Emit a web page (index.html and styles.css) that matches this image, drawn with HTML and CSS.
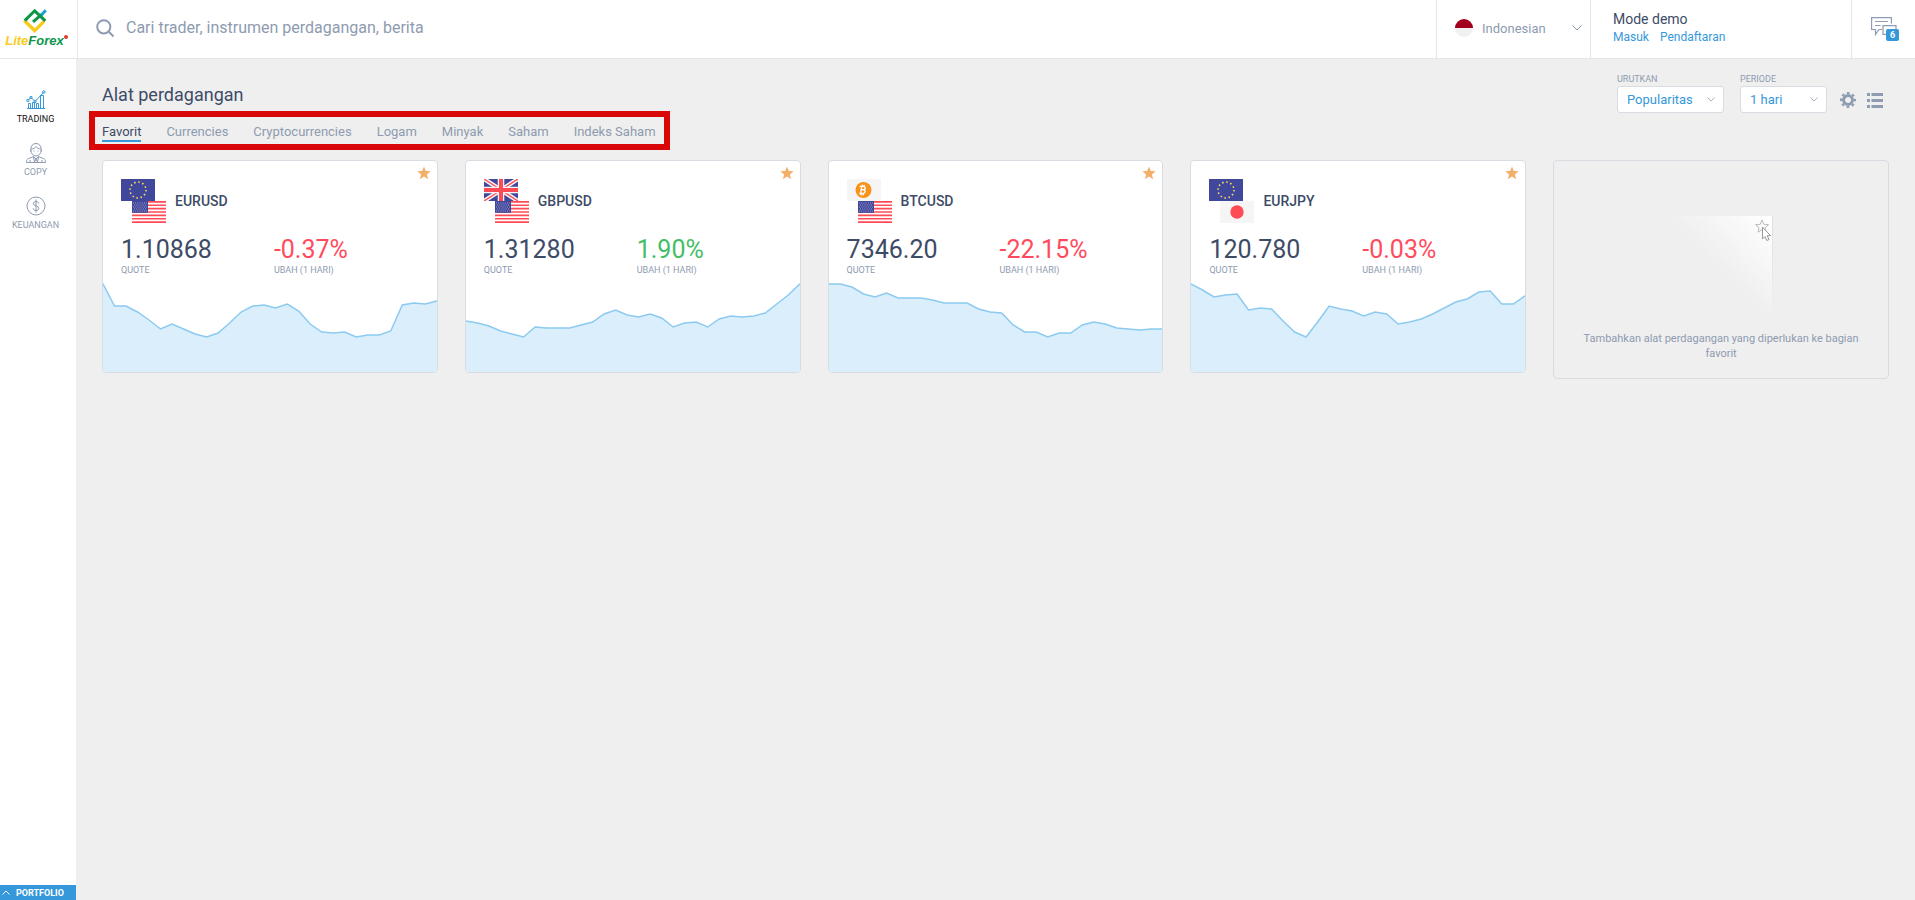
FILE: index.html
```
<!DOCTYPE html>
<html lang="id">
<head>
    <meta charset="UTF-8">
    <meta name="viewport" content="width=device-width, initial-scale=1.0">
    <title>LiteForex</title>
    <link rel="stylesheet" href="styles.css">
</head>
<body>
    <svg class="sprite" aria-hidden="true">
        <symbol id="flag-eu" viewBox="0 0 34 22">
            <rect width="34" height="22" fill="#41479b"/>
            <circle cx="17" cy="11" r="8" fill="none" stroke="#ffe15a" stroke-width="1.6" stroke-dasharray="1.5 2.69"/>
        </symbol>
        <symbol id="flag-us" viewBox="0 0 34 22">
            <rect width="34" height="22" fill="#fff"/>
            <path d="M0 .85h34M0 4.23h34M0 7.61h34M0 11h34M0 14.38h34M0 17.77h34M0 21.15h34" stroke="#ff4b55" stroke-width="1.7"/>
            <rect width="16" height="11.8" fill="#41479b"/>
            <path d="M1 2h14M2 4h13M1 6h14M2 8h13M1 10h14" stroke="#a9acd3" stroke-width=".9" stroke-dasharray="1 1.2"/>
        </symbol>
        <symbol id="flag-gb" viewBox="0 0 34 22">
            <rect width="34" height="22" fill="#41479b"/>
            <path d="M0 0l34 22M34 0L0 22" stroke="#f5f5f5" stroke-width="4.4"/>
            <path d="M0 0l14 9M34 0L20 9M0 22l14-9M34 22l-14-9" stroke="#ff4b55" stroke-width="1.4"/>
            <path d="M17 0v22M0 11h34" stroke="#f5f5f5" stroke-width="6.6"/>
            <path d="M17 0v22M0 11h34" stroke="#ff4b55" stroke-width="4"/>
        </symbol>
        <symbol id="flag-btc" viewBox="0 0 34 22">
            <rect width="34" height="22" fill="#f5f5f5"/>
            <circle cx="16.5" cy="11" r="8" fill="#f7931a"/>
            <path d="M14.6 7.6l-.9 6.9M12.6 7.4h3.6c2.9.1 2.7 3.3-.2 3.3h-1.5M16 10.8c3.2.2 2.7 3.7-.7 3.7h-3M15.4 5.6l-.2 1.6M17.4 5.8l-.2 1.6M14.4 14.6l-.2 1.7M16.4 14.6l-.2 1.7" fill="none" stroke="#fff" stroke-width="1.3"/>
        </symbol>
        <symbol id="flag-jp" viewBox="0 0 34 22">
            <rect width="34" height="22" fill="#f5f5f5"/>
            <circle cx="17" cy="11" r="6.7" fill="#ff4b55"/>
        </symbol>
        <symbol id="star" viewBox="0 0 14 14">
            <path d="M7 .4l1.8 4.7 4.9.2-3.8 3.1 1.3 4.9L7 10.6l-4.2 2.7 1.3-4.9L.3 5.3l4.9-.2z" fill="#f2af6a"/>
        </symbol>
        <symbol id="chevron" viewBox="0 0 10 6">
            <path d="M.5.5L5 5 9.500.5" fill="none" stroke="#8e9bb0"/>
        </symbol>
    </svg>

    <header class="header">
        <a class="logo" href="#">
            <svg width="24" height="25" viewBox="0 0 24 25" fill="none" stroke-width="3">
                <path d="M1.200 12.500L11.700 22.600l9.300-9.200" stroke="#f9cb1c" stroke-width="3.400"/>
                <path d="M18 7.600L22.800 2.200" stroke="#16a0e0"/>
                <path d="M4 12.800L2.800 11.600l8.900-8.800 10.600 10M10 13.800l8.500-7.200" stroke="#0d9648"/>
            </svg>
            <span class="logo-text"><span class="logo-lite">Lite</span>Forex<i class="logo-dot"></i></span>
        </a>
        <label class="search">
            <svg width="18" height="18" viewBox="0 0 18 18" fill="none" stroke="#8e9bb0" stroke-width="2">
                <circle cx="7.800" cy="7.800" r="6.600"/>
                <path d="M12.500 12.500l5 5"/>
            </svg>
            <input type="text" placeholder="Cari trader, instrumen perdagangan, berita" aria-label="Cari">
        </label>
        <button class="language" type="button">
            <svg width="18" height="18" viewBox="0 0 18 18">
                <circle cx="9" cy="9" r="9" fill="#f0f0f0"/>
                <path d="M0 9a9 9 0 0 1 18 0z" fill="#a2001d"/>
            </svg>
            <span>Indonesian</span>
            <svg class="language-arrow" width="10" height="6"><use href="#chevron"/></svg>
        </button>
        <div class="account">
            <div class="account-mode">Mode demo</div>
            <div class="account-links">
                <a href="#">Masuk</a>
                <a href="#">Pendaftaran</a>
            </div>
        </div>
        <button class="messages" type="button" aria-label="Pesan">
            <svg width="26" height="19" viewBox="0 0 26 19" fill="none" stroke="#8e9bb0" stroke-width="1.200">
                <path d="M11 12.500H8l-3.500 5v-5H.6V.6h19.800v6"/>
                <path d="M4 4.500h13M4 8.500h5.500"/>
                <path d="M25 13V8.600H12v8.800h4"/>
            </svg>
            <span class="badge">6</span>
        </button>
    </header>

    <div class="page">
        <aside class="sidebar">
            <nav class="menu">
                <a class="menu-item active" href="#">
                    <svg width="20" height="20" viewBox="0 0 20 20" fill="none" stroke="#3498db">
                        <path d="M2.500 18.500v-5h2v5M6.500 18.500v-6h2v6M10.500 18.500v-5h2v5M14.500 18.500V5.500h3v13M1 18.500h18"/>
                        <path d="M2 10.500l3-3 4 4 8.500-9"/>
                        <circle cx="1.800" cy="10.500" r="1.200"/>
                        <circle cx="5" cy="7.500" r="1.200"/>
                        <circle cx="9" cy="11.500" r="1.200"/>
                        <circle cx="17.800" cy="2" r="1.200"/>
                    </svg>
                    TRADING
                </a>
                <a class="menu-item" href="#">
                    <svg width="20" height="20" viewBox="0 0 20 20" fill="none" stroke="#8e9bb0">
                        <path d="M5 5.500C5 2.500 7 .5 10 .5s5 2 5 5v2c0 3.200-2.200 5.500-5 5.500s-5-2.300-5-5.500z"/>
                        <path d="M5 6c3 0 4-1 5-2.500C11 5 13 6 15 6M4.500 6.500v2M15.500 6.500v2M7.500 8h1M11.500 8h1"/>
                        <path d="M.5 19.500c0-3 1-4 3.500-4.500l3.500-1.500L10 16l2.500-2.500L16 15c2.500.5 3.500 1.500 3.500 4.500z"/>
                        <path d="M7.500 14l1 5 1.500-3 1.500 3 1-5M4 17v2M16 17v2"/>
                    </svg>
                    COPY
                </a>
                <a class="menu-item" href="#">
                    <svg width="20" height="20" viewBox="0 0 20 20" fill="none" stroke="#8e9bb0">
                        <circle cx="10" cy="10" r="9"/>
                        <path d="M12.600 7.500c-.2-1.400-1.200-2-2.600-2s-2.600.8-2.600 2.200c0 3 5.400 1.500 5.400 4.600 0 1.400-1.200 2.200-2.800 2.200s-2.700-.8-2.800-2.200M10 3.500v13"/>
                    </svg>
                    KEUANGAN
                </a>
            </nav>
            <button class="portfolio" type="button">
                <svg width="8" height="5" viewBox="0 0 8 5"><path d="M.5 4.500L4 1l3.500 3.500" fill="none" stroke="#fff"/></svg>
                PORTFOLIO
            </button>
        </aside>

        <main class="content">
            <div class="toolbar">
                <div class="heading">
                    <h1>Alat perdagangan</h1>
                    <nav class="tabs">
                        <a class="active" href="#">Favorit</a>
                        <a href="#">Currencies</a>
                        <a href="#">Cryptocurrencies</a>
                        <a href="#">Logam</a>
                        <a href="#">Minyak</a>
                        <a href="#">Saham</a>
                        <a href="#">Indeks Saham</a>
                    </nav>
                </div>
                <div class="filters">
                    <div class="filter filter-sort">
                        <label for="sort">URUTKAN</label>
                        <div class="select">
                            <select id="sort"><option>Popularitas</option></select>
                            <svg width="8" height="5"><use href="#chevron"/></svg>
                        </div>
                    </div>
                    <div class="filter filter-period">
                        <label for="period">PERIODE</label>
                        <div class="select">
                            <select id="period"><option>1 hari</option></select>
                            <svg width="8" height="5"><use href="#chevron"/></svg>
                        </div>
                    </div>
                    <button class="icon-button" type="button" aria-label="Pengaturan">
                        <svg width="16" height="16" viewBox="0 0 16 16" fill="none" stroke="#8e9bb0">
                            <circle cx="8" cy="8" r="4.500" stroke-width="3"/>
                            <circle cx="8" cy="8" r="7" stroke-width="2" stroke-dasharray="2.700 2.798" stroke-dashoffset="1.350"/>
                        </svg>
                    </button>
                    <button class="icon-button" type="button" aria-label="Daftar">
                        <svg width="16" height="16" viewBox="0 0 16 16" stroke="#8e9bb0" stroke-width="3">
                            <path d="M0 2.500h3M4.500 2.500H16M0 8.500h3M4.500 8.500H16M0 14.500h3M4.500 14.500H16"/>
                        </svg>
                    </button>
                </div>
            </div>

            <div class="cards">
                <article class="card">
                    <button class="favorite" type="button" aria-label="Favorit"><svg width="14" height="14"><use href="#star"/></svg></button>
                    <div class="instrument">
                        <div class="flags">
                            <svg width="34" height="22"><use href="#flag-eu"/></svg>
                            <svg width="34" height="22"><use href="#flag-us"/></svg>
                        </div>
                        <h2>EURUSD</h2>
                    </div>
                    <div class="values">
                        <div><div class="number">1.10868</div><div class="caption">QUOTE</div></div>
                        <div><div class="number down">-0.37%</div><div class="caption">UBAH (1 HARI)</div></div>
                    </div>
                    <svg class="chart" viewBox="0 0 29 89" preserveAspectRatio="none">
                        <path d="M-1 95V1H0L1 23 2 23 3 29 4 37 5 46 6 41 7 46 8 51 9 54 10 50 11 40 12 29 13 23 14 22 15 25 16 21 17 28 18 41 19 49 20 50 21 49 22 54 23 52 24 52 25 48 26 22 27 20 28 21 29 18H30V95"/>
                    </svg>
                </article>

                <article class="card">
                    <button class="favorite" type="button" aria-label="Favorit"><svg width="14" height="14"><use href="#star"/></svg></button>
                    <div class="instrument">
                        <div class="flags">
                            <svg width="34" height="22"><use href="#flag-gb"/></svg>
                            <svg width="34" height="22"><use href="#flag-us"/></svg>
                        </div>
                        <h2>GBPUSD</h2>
                    </div>
                    <div class="values">
                        <div><div class="number">1.31280</div><div class="caption">QUOTE</div></div>
                        <div><div class="number up">1.90%</div><div class="caption">UBAH (1 HARI)</div></div>
                    </div>
                    <svg class="chart" viewBox="0 0 29 89" preserveAspectRatio="none">
                        <path d="M-1 95V38H0L1 40 2 43 3 48 4 51 5 54 6 44 7 45 8 45 9 45 10 42 11 39 12 31 13 27 14 32 15 34 16 31 17 35 18 44 19 40 20 39 21 44 22 36 23 33 24 34 25 33 26 30 27 21 28 12 29 1H30V95"/>
                    </svg>
                </article>

                <article class="card">
                    <button class="favorite" type="button" aria-label="Favorit"><svg width="14" height="14"><use href="#star"/></svg></button>
                    <div class="instrument">
                        <div class="flags">
                            <svg width="34" height="22"><use href="#flag-btc"/></svg>
                            <svg width="34" height="22"><use href="#flag-us"/></svg>
                        </div>
                        <h2>BTCUSD</h2>
                    </div>
                    <div class="values">
                        <div><div class="number">7346.20</div><div class="caption">QUOTE</div></div>
                        <div><div class="number down">-22.15%</div><div class="caption">UBAH (1 HARI)</div></div>
                    </div>
                    <svg class="chart" viewBox="0 0 29 89" preserveAspectRatio="none">
                        <path d="M-1 95V1H0L1 1 2 4 3 11 4 14 5 10 6 15 7 15 8 15 9 17 10 20 11 20 12 20 13 26 14 29 15 30 16 42 17 49 18 49 19 54 20 50 21 50 22 42 23 39 24 41 25 45 26 46 27 47 28 46 29 46H30V95"/>
                    </svg>
                </article>

                <article class="card">
                    <button class="favorite" type="button" aria-label="Favorit"><svg width="14" height="14"><use href="#star"/></svg></button>
                    <div class="instrument">
                        <div class="flags">
                            <svg width="34" height="22"><use href="#flag-eu"/></svg>
                            <svg width="34" height="22"><use href="#flag-jp"/></svg>
                        </div>
                        <h2>EURJPY</h2>
                    </div>
                    <div class="values">
                        <div><div class="number">120.780</div><div class="caption">QUOTE</div></div>
                        <div><div class="number down">-0.03%</div><div class="caption">UBAH (1 HARI)</div></div>
                    </div>
                    <svg class="chart" viewBox="0 0 29 89" preserveAspectRatio="none">
                        <path d="M-1 95V1H0L1 7 2 14 3 12 4 11 5 27 6 25 7 26 8 38 9 49 10 54 11 39 12 23 13 26 14 28 15 33 16 29 17 31 18 41 19 39 20 36 21 31 22 25 23 19 24 16 25 9 26 8 27 21 28 21 29 13H30V95"/>
                    </svg>
                </article>

                <div class="card card-empty">
                    <svg width="104" height="106" viewBox="0 0 104 106">
                        <defs>
                            <linearGradient id="shine" x1="1" y1="0" x2=".5" y2=".5">
                                <stop offset="0" stop-color="#fff"/>
                                <stop offset=".25" stop-color="#fbfbfb"/>
                                <stop offset="1" stop-color="#efefef"/>
                            </linearGradient>
                            <linearGradient id="edge" x1="0" y1="0" x2="0" y2="1">
                                <stop offset="0" stop-color="#dfdfdf"/>
                                <stop offset="1" stop-color="#efefef"/>
                            </linearGradient>
                        </defs>
                        <rect x="103" y="1" width="1" height="98" fill="url(#edge)"/>
                        <rect y="1" width="103" height="105" fill="url(#shine)"/>
                        <path d="M93 5l1.800 4.300 4.700.4-3.500 3 1 4.500-4-2.500-4 2.500 1-4.500-3.500-3 4.700-.4z" fill="none" stroke="#bbb"/>
                        <path d="M93.500 12v12l2.500-2.500 1.800 4 2.200-1-1.800-3.800h3.300z" fill="#fff" stroke="#999"/>
                    </svg>
                    <p>Tambahkan alat perdagangan yang diperlukan ke bagian favorit</p>
                </div>
            </div>
        </main>
    </div>
</body>
</html>
```

FILE: styles.css
```
* {
    box-sizing: border-box;
}
body {
    margin: 0;
    min-height: 100vh;
    display: flex;
    flex-direction: column;
    background: #efefef;
    color: #3d4b66;
    font-family: Roboto, "Liberation Sans", sans-serif;
    font-size: 13px;
}
a {
    color: inherit;
    text-decoration: none;
}
button {
    padding: 0;
    border: 0;
    background: none;
    color: inherit;
    font: inherit;
    cursor: pointer;
}
svg {
    display: block;
    flex: none;
}
.sprite {
    position: absolute;
    width: 0;
    height: 0;
}

/* header */
.header {
    display: flex;
    height: 59px;
    background: #fff;
    border-bottom: 1px solid #e6e6e6;
}
.logo {
    width: 78px;
    padding: 8px 8px 0 0;
    border-right: 1px solid #e6e6e6;
    display: flex;
    flex-direction: column;
    align-items: center;
}
.logo-text {
    position: relative;
    color: #0d9648;
    font: italic bold 13px/15px "Liberation Sans", sans-serif;
}
.logo-lite {
    color: #f9cb1c;
}
.logo-dot {
    position: absolute;
    top: 2px;
    right: -4px;
    width: 4px;
    height: 4px;
    border-radius: 50%;
    background: #e03a2f;
}
.search {
    flex: 1;
    display: flex;
    align-items: center;
    gap: 12px;
    padding: 0 18px 2px;
}
.search input {
    flex: 1;
    padding: 0;
    border: 0;
    outline: 0;
    background: none;
    font: 16px/20px Roboto, sans-serif;
}
.search input::placeholder {
    color: #8e9bb0;
    opacity: 1;
}
.language {
    width: 154px;
    padding: 0 8px 2px 18px;
    border-left: 1px solid #e6e6e6;
    display: flex;
    align-items: center;
    gap: 9px;
    color: #8e9bb0;
}
.language-arrow {
    margin-left: auto;
}
.account {
    width: 261px;
    padding: 10px 22px 0;
    border-left: 1px solid #e6e6e6;
}
.account-mode {
    font-size: 14px;
    line-height: 18px;
}
.account-links {
    display: flex;
    gap: 11px;
    color: #3498db;
    font-size: 12px;
    line-height: 18px;
}
.messages {
    position: relative;
    width: 64px;
    padding: 17px 0 0 19px;
    border-left: 1px solid #e6e6e6;
    display: flex;
    align-items: flex-start;
}
.badge {
    position: absolute;
    top: 29px;
    left: 34px;
    width: 13px;
    height: 12px;
    border-radius: 2px;
    background: #3498db;
    color: #fff;
    font-size: 9px;
    font-weight: bold;
    line-height: 13px;
}

/* sidebar */
.page {
    flex: 1;
    display: flex;
}
.sidebar {
    width: 76px;
    background: #fff;
    display: flex;
    flex-direction: column;
    justify-content: space-between;
}
.menu {
    padding: 31px 5px 0 0;
    display: flex;
    flex-direction: column;
    gap: 18px;
}
.menu-item {
    display: flex;
    flex-direction: column;
    align-items: center;
    gap: 3px;
    color: #8e9bb0;
    font-size: 9px;
    line-height: 12px;
}
.menu-item.active {
    color: #111;
}
.portfolio {
    height: 15px;
    padding-left: 2px;
    display: flex;
    align-items: center;
    gap: 6px;
    background: #3498db;
    color: #fff;
    font-size: 9px;
    font-weight: bold;
}

/* content */
.content {
    flex: 1;
    padding: 14px 26px;
}
.toolbar {
    display: flex;
    justify-content: space-between;
    align-items: flex-start;
}
h1 {
    margin: 10px 0 5px;
    font-size: 18px;
    font-weight: normal;
    line-height: 23px;
}
.tabs {
    display: flex;
    gap: 25px;
    height: 39px;
    margin-left: -13px;
    padding: 6px 8px 0 7px;
    border: 6px solid #d90707;
    color: #8e9bb0;
}
.tabs a {
    height: 19px;
    line-height: 17px;
}
.tabs .active {
    color: #3d4b66;
    border-bottom: 2px solid #3498db;
}
.filters {
    display: flex;
    align-items: flex-end;
}
.filter label {
    display: block;
    color: #8e9bb0;
    font-size: 9px;
    line-height: 13px;
}
.filter-sort {
    width: 107px;
    margin-right: 16px;
}
.filter-period {
    width: 87px;
    margin-right: 13px;
}
.select {
    position: relative;
}
.select select {
    width: 100%;
    height: 27px;
    padding: 0 9px;
    border: 1px solid #d8dce2;
    border-radius: 3px;
    background: #fff;
    color: #3498db;
    font: 13px Roboto, sans-serif;
    appearance: none;
}
.select svg {
    position: absolute;
    top: 11px;
    right: 9px;
    pointer-events: none;
}
.icon-button {
    margin: 0 11px 5px 0;
}
.icon-button:last-child {
    margin-right: 6px;
}

/* cards */
.cards {
    margin-top: 10px;
    display: grid;
    grid-template-columns: repeat(5, 1fr);
    align-items: start;
    gap: 27px;
}
.card {
    position: relative;
    border: 1px solid #d8dce2;
    border-radius: 4px;
    background: #fff;
    overflow: hidden;
}
.favorite {
    position: absolute;
    top: 5px;
    right: 6px;
}
.instrument {
    display: flex;
    align-items: center;
    gap: 9px;
    padding: 18px 18px 0;
}
.flags {
    width: 45px;
}
.flags svg:last-child {
    margin-left: 11px;
}
h2 {
    margin: 0;
    font-size: 14px;
    font-weight: 500;
    line-height: 18px;
}
.values {
    display: grid;
    grid-template-columns: 1fr 1fr;
    gap: 8px;
    padding: 12px 18px 7px;
}
.number {
    font-size: 25px;
    line-height: 30px;
}
.caption {
    color: #8e9bb0;
    font-size: 9px;
    line-height: 11px;
}
.up {
    color: #44be66;
}
.down {
    color: #ff4b5c;
}
.chart {
    width: 100%;
    height: 89px;
}
.chart path {
    fill: #daeefb;
    stroke: #8ccaf0;
    stroke-width: 1.5px;
    vector-effect: non-scaling-stroke;
}
.card-empty {
    padding: 54px 26px 17px;
    background: none;
    text-align: center;
}
.card-empty svg {
    margin: 0 auto;
}
.card-empty p {
    margin: 10px 0 0;
    color: #8e9bb0;
    font-size: 11px;
    line-height: 15px;
}
```
